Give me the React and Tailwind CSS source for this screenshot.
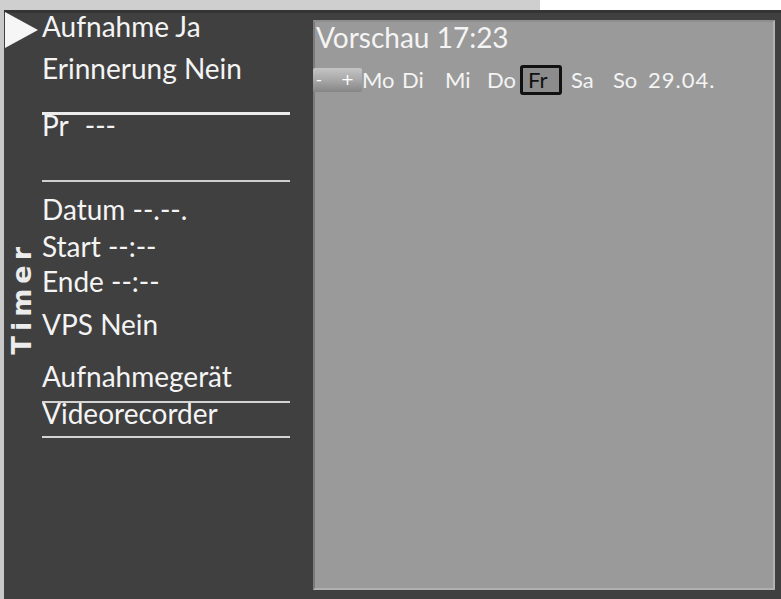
const days = [
  { label: 'Mo', w: 'w-[40px]' },
  { label: 'Di', w: 'w-[43px]' },
  { label: 'Mi', w: 'w-[42px]' },
  { label: 'Do', w: 'w-[33px]' },
];

export default function App() {
  return (
    <div className="w-[781px] h-[599px] flex flex-col overflow-hidden font-['Lato','Liberation_Sans',sans-serif] text-[#f4f4f4]">
      {/* top strip */}
      <div className="h-[10px] flex">
        <div className="w-[540px] bg-[#cfcfcf]" />
        <div className="flex-1 bg-white" />
      </div>

      <div className="flex-1 flex">
        <div className="w-[4px] bg-[#c9c9c9]" />
        <div className="flex-1 flex bg-[#404040] border-t-[3px] border-[#343434]">
          {/* arrow + vertical label */}
          <div className="w-[38px] flex flex-col">
            <svg width="34" height="36" viewBox="0 0 34 36" className="ml-[1px] mt-[-1px]">
              <polygon points="0,0 33,18 0,36" fill="#f6f6f6" />
            </svg>
            <span className="mt-[194px] ml-[7px] self-start [writing-mode:vertical-rl] rotate-180 font-['DejaVu_Sans',sans-serif] font-bold text-[27px] leading-[22px] tracking-[5px] text-[#ececec]">
              Timer
            </span>
          </div>

          {/* menu rows */}
          <div className="w-[271px] flex flex-col text-[28px] leading-[32px]">
            <div className="mt-[-3px]">Aufnahme Ja</div>
            <div className="mt-[10px]">Erinnerung Nein</div>
            <div className="mt-[28px] w-[248px] h-[3px] bg-[#ececec]" />
            <div className="leading-[21px]">
              Pr<span className="ml-[16px]">---</span>
            </div>
            <div className="mt-[44px] w-[248px] h-[2px] bg-[#cfcfcf]" />
            <div className="mt-[11px]">Datum --.--.</div>
            <div className="mt-[5px]">Start --:--</div>
            <div className="mt-[3px]">Ende --:--</div>
            <div className="mt-[11px]">VPS Nein</div>
            <div className="mt-[20px]">Aufnahmegerät</div>
            <div className="mt-[9px] w-[248px] h-[2px] bg-[#d4d4d4]" />
            <div className="leading-[21px]">Videorecorder</div>
            <div className="mt-[12px] w-[248px] h-[2px] bg-[#d4d4d4]" />
          </div>

          {/* preview panel */}
          <div className="w-[462px] mt-[7px] mb-[9px] bg-[#9a9a9a] border-[2px] border-t-[#8e8e8e] border-l-[#7c7c7c] border-r-[#b2b2b2] border-b-[#b0b0b0] flex flex-col">
            <div className="text-[28px] leading-[32px] ml-[1px] mt-[-1px]">Vorschau 17:23</div>
            <div className="mt-[12px] h-[30px] flex items-center text-[22px] leading-[22px]">
              <div className="w-[49px] h-[24px] ml-[-2px] rounded-[2px] bg-gradient-to-b from-[#c4c4c4] via-[#a8a8a8] to-[#858585] flex items-center text-[16px] leading-[16px] font-['DejaVu_Sans',sans-serif] text-white">
                <span className="ml-[3px]">-</span>
                <span className="ml-[19px]">+</span>
              </div>
              {days.map((d) => (
                <span key={d.label} className={d.w}>{d.label}</span>
              ))}
              <div className="w-[42px] h-[30px] rounded-[3px] border-[3px] border-[#111] bg-[#8c8c8c] text-[#111] pl-[5px] flex items-center">
                Fr
              </div>
              <span className="ml-[9px] w-[42px]">Sa</span>
              <span className="w-[35px]">So</span>
              <span className="tracking-[1px]">29.04.</span>
            </div>
          </div>
        </div>
      </div>
    </div>
  );
}
